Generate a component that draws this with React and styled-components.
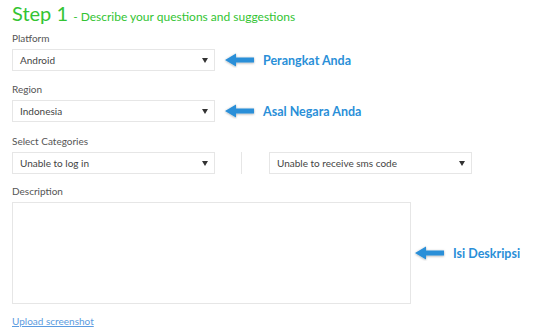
import styled, { createGlobalStyle } from "styled-components";

const Global = createGlobalStyle`
    body {
        margin: 0;
        background: #fff;
        font-family: Lato, "Open Sans", sans-serif;
    }
`;

const Page = styled.div`
    padding: 0 12px;
    width: 560px;
    box-sizing: border-box;
`;

const Title = styled.h1`
    margin: 0;
    height: 28px;
    line-height: 27px;
    color: #33c433;
    font-weight: normal;
    font-size: 20px;
`;

const Sub = styled.span`
    font-size: 12px;
`;

const Field = styled.div`
    margin-top: ${(p) => p.gap || 10}px;
`;

const Label = styled.div`
    font-size: 10px;
    line-height: 16px;
    color: #555;
    margin-bottom: 3px;
`;

const Row = styled.div`
    display: flex;
    align-items: center;
`;

const Select = styled.div`
    width: 203px;
    height: 22px;
    box-sizing: border-box;
    border: 1px solid #e6e6e6;
    display: flex;
    align-items: center;
    justify-content: space-between;
    padding: 0 6px 0 7px;
    font-size: 10px;
    color: #444;
`;

const Caret = styled.span`
    width: 0;
    height: 0;
    border-left: 3.5px solid transparent;
    border-right: 3.5px solid transparent;
    border-top: 5px solid #333;
`;

const Divider = styled.div`
    width: 1px;
    height: 22px;
    background: #e6e6e6;
    margin: 0 27px 0 26px;
`;

const Note = styled.div`
    display: flex;
    align-items: center;
    margin-left: ${(p) => p.offset || 9}px;
    gap: 7px;
    color: #2a8fd8;
    font-weight: bold;
    font-size: 12.5px;
`;

const TextArea = styled.div`
    width: 399px;
    height: 102px;
    box-sizing: border-box;
    border: 1px solid #e6e6e6;
`;

const Upload = styled.a`
    display: block;
    margin-top: 9px;
    font-size: 10px;
    line-height: 16px;
    color: #5b9be0;
    text-decoration: underline;
`;

const Arrow = () => (
    <svg width="32" height="16" viewBox="0 0 32 16">
        <defs>
            <filter id="sh" x="-20%" y="-40%" width="140%" height="180%">
                <feDropShadow dx="0" dy="0.6" stdDeviation="0.8" floodColor="#000" floodOpacity="0.35" />
            </filter>
        </defs>
        <path d="M1 8 L12 1.5 L12 5.5 L30 5.5 L30 10.5 L12 10.5 L12 14.5 Z" fill="#2a8fd8" filter="url(#sh)" />
    </svg>
);

const Dropdown = ({ value }) => (
    <Select>
        {value}
        <Caret />
    </Select>
);

const App = () => {
    return (
        <Page>
            <Global />
            <Title>
                Step 1 <Sub>- Describe your questions and suggestions</Sub>
            </Title>
            <Field gap={2}>
                <Label>Platform</Label>
                <Row>
                    <Dropdown value="Android" />
                    <Note>
                        <Arrow />
                        Perangkat Anda
                    </Note>
                </Row>
            </Field>
            <Field>
                <Label>Region</Label>
                <Row>
                    <Dropdown value="Indonesia" />
                    <Note>
                        <Arrow />
                        Asal Negara Anda
                    </Note>
                </Row>
            </Field>
            <Field gap={11}>
                <Label>Select Categories</Label>
                <Row>
                    <Dropdown value="Unable to log in" />
                    <Divider />
                    <Dropdown value="Unable to receive sms code" />
                </Row>
            </Field>
            <Field gap={9}>
                <Label>Description</Label>
                <Row>
                    <TextArea />
                    <Note offset={3}>
                        <Arrow />
                        Isi Deskripsi
                    </Note>
                </Row>
            </Field>
            <Upload href="#">Upload screenshot</Upload>
        </Page>
    );
};

export default App;
